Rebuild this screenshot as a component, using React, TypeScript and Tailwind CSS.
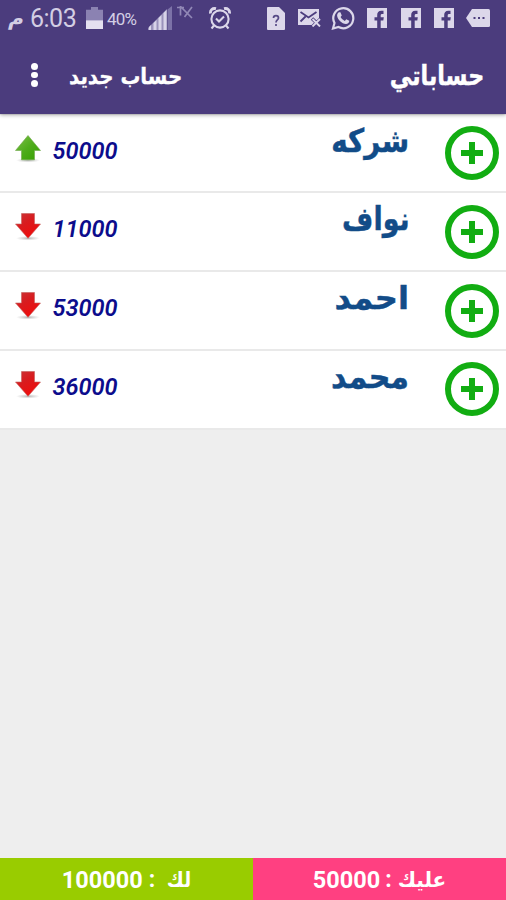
type Account = {
  name: string;
  amount: number;
  direction: "up" | "down";
  nameClass: string;
};

// each name is stretched a little, the display face is taller than DejaVu
const accounts: Account[] = [
  { name: "شركه", amount: 50000, direction: "up", nameClass: "scale-x-[0.96] scale-y-[1.12]" },
  { name: "نواف", amount: 11000, direction: "down", nameClass: "scale-x-[0.93] scale-y-[1.12]" },
  { name: "احمد", amount: 53000, direction: "down", nameClass: "scale-x-[1.11] scale-y-[1.1]" },
  { name: "محمد", amount: 36000, direction: "down", nameClass: "scale-x-[1.04] scale-y-[1.12]" },
];

function BatteryIcon() {
  return (
    <svg className="ml-[10px] h-[22px] w-[17px] shrink-0" viewBox="0 0 17 23" preserveAspectRatio="none">
      <path d="M5 0h7v3h5v12H0V3h5z" fill="#8b82b2" />
      <path d="M0 14h17v9H0z" fill="#e4e0f0" />
    </svg>
  );
}

function SignalIcon() {
  return (
    <svg className="ml-[11px] h-[24px] w-[25px] shrink-0" viewBox="0 0 25 24">
      <path d="M0 24v-2l19-19v21z" fill="#9a92bb" />
      <path d="M1 24v-3l2-2v5zM5.5 24v-7l3-3v10zM10.5 24V12l3-3v15zM15.5 24V7l3-3v20z" fill="#d8d3e8" />
      <path d="M19.5 24V3.5L24 0v24z" fill="#7c72a7" />
    </svg>
  );
}

function NoDataIcon() {
  return (
    <svg className="mt-[-11px] ml-[3px] h-[13px] w-[18px] shrink-0" viewBox="0 0 18 13" fill="none" stroke="#9188b6" strokeWidth="1.7">
      <path d="M1 1.5h7M4.5 1.5v8M8.5 11l7.5-10M4 0l12 12" />
    </svg>
  );
}

function AlarmIcon() {
  return (
    <svg className="ml-[15px] h-[23px] w-[22px] shrink-0" viewBox="0 0 22 23" fill="none" stroke="#dcd7ea" strokeWidth="2.1">
      <circle cx="11" cy="12" r="8.6" />
      <path d="M7 11.5l3 3 5-5M5 18.5l-2.5 3M17 18.5l2.5 3" />
      <path d="M1.5 6.5C1 3 3.5 .8 7 1.7M20.5 6.5C21 3 18.5 .8 15 1.7" strokeWidth="2.8" />
    </svg>
  );
}

function FileIcon() {
  return (
    <svg className="ml-[36px] h-[23px] w-[18px] shrink-0" viewBox="0 0 18 23">
      <path d="M1 0h11l6 6v16a1 1 0 0 1-1 1H1a1 1 0 0 1-1-1V1a1 1 0 0 1 1-1z" fill="#dcd7ea" />
      <path d="M6.5 11c0-3.2 5-3.2 5 0 0 2-2.5 2-2.5 4.5M9 17v2" fill="none" stroke="#574a87" strokeWidth="1.7" />
    </svg>
  );
}

function MailIcon() {
  return (
    <svg className="ml-[13px] h-[18px] w-[23px] shrink-0" viewBox="0 0 23 18">
      <path d="M0 0h21v16H0z" fill="#dcd7ea" />
      <path d="M2.5 3l8 5.500 8-5.500M2.500 12.500l5-5" fill="none" stroke="#4b3c7d" strokeWidth="1.8" />
      <path d="M14 9.5l9 8.5M23 9.5L14 18" fill="none" stroke="#4b3c7d" strokeWidth="3.5" />
      <path d="M14.5 10l7.5 7.5M22 10l-7.5 7.5" fill="none" stroke="#dcd7ea" strokeWidth="1.9" />
    </svg>
  );
}

function WhatsAppIcon() {
  return (
    <svg className="ml-[10px] h-[24px] w-[24px] shrink-0" viewBox="0 0 24 24">
      <path d="M2 22.5l1.5-5.5A10 10 0 1 1 7.5 21z" fill="none" stroke="#dcd7ea" strokeWidth="2.2" />
      <path d="M8 6.2l1.4.1 1.4 3.2-1.2 1.6c1 1.8 2.3 3 4.2 3.8l1.5-1.6 3 1.5c.1 2-1.5 3.2-3.3 3.2-4.2-.4-8.3-4.4-8.900-8.300-.1-1.500.7-2.900 1.900-3.500z" fill="#dcd7ea" />
    </svg>
  );
}

function FacebookIcon({ className }: { className: string }) {
  return (
    <svg className={className} viewBox="0 0 20 20">
      <path d="M0 0h20v20H0z" fill="#dcd7ea" />
      <path d="M16.5 2.8h-2.1c-3 0-4.2 1.8-4.2 4.2v2.3H7.500V12.500h2.700V20h3.500v-7.500h2.600l.5-3.200h-3.100V7.600c0-1 .4-1.500 1.500-1.500h1.300z" fill="#4b3c7d" />
    </svg>
  );
}

function MoreTagIcon() {
  return (
    <svg className="ml-[12px] h-[18px] w-[24px] shrink-0" viewBox="0 0 24 18">
      <path d="M6 0h16.5a1.5 1.5 0 0 1 1.5 1.5v15a1.5 1.5 0 0 1-1.5 1.5H6L0 9z" fill="#dcd7ea" />
      <path d="M7.5 8h2v2h-2zM12 8h2v2h-2zM16.5 8h2v2h-2z" fill="#4b3c7d" />
    </svg>
  );
}

function StatusBar() {
  return (
    <div className="flex h-[36px] items-center pl-[10px] text-[#d3cee4]">
      <span className="w-[15px] -skew-x-12 scale-x-110 text-[19px] font-bold leading-none">م</span>
      <span className="ml-[5px] mt-px w-[46px] font-['Roboto'] text-[25px] leading-none tracking-[-0.5px]">6:03</span>
      <BatteryIcon />
      <span className="ml-[4px] mt-[2px] w-[30px] font-['Roboto'] text-[17px] leading-none tracking-[-0.8px]">40%</span>
      <SignalIcon />
      <NoDataIcon />
      <AlarmIcon />
      <FileIcon />
      <MailIcon />
      <WhatsAppIcon />
      <FacebookIcon className="ml-[12px] h-[20px] w-[20px] shrink-0" />
      <FacebookIcon className="ml-[14px] h-[20px] w-[20px] shrink-0" />
      <FacebookIcon className="ml-[13px] h-[20px] w-[20px] shrink-0" />
      <MoreTagIcon />
    </div>
  );
}

function ArrowIcon({ direction }: { direction: "up" | "down" }) {
  const up = direction === "up";
  return (
    <svg className="h-[28px] w-[28px] shrink-0" viewBox="0 0 28 28">
      <defs>
        <linearGradient id="green" x1="0" y1="0" x2="1" y2="1">
          <stop offset="0" stopColor="#7fc04a" />
          <stop offset="0.5" stopColor="#4fac1c" />
          <stop offset="1" stopColor="#35a000" />
        </linearGradient>
        <linearGradient id="red" x1="0" y1="0" x2="0.6" y2="1">
          <stop offset="0" stopColor="#c93638" />
          <stop offset="0.45" stopColor="#d81c1f" />
          <stop offset="1" stopColor="#f00c0c" />
        </linearGradient>
        <radialGradient id="shade">
          <stop offset="0" stopColor="#777" stopOpacity="0.55" />
          <stop offset="1" stopColor="#999" stopOpacity="0" />
        </radialGradient>
      </defs>
      <ellipse cx="14" cy="25.3" rx="12" ry="2.3" fill="url(#shade)" />
      {up ? (
        <path d="M14 .5L26.500 15.500H20.500v9.300h-13V15.500H1.500z" fill="url(#green)" stroke="#6fa84a" strokeWidth="0.6" />
      ) : (
        <path d="M7.500 .5h13v10.500h6L14 25.300 1.500 11h6z" fill="url(#red)" stroke="#c4605c" strokeWidth="0.6" />
      )}
    </svg>
  );
}

function AddIcon() {
  return (
    <svg className="h-[54px] w-[54px]" viewBox="0 0 54 54" fill="none" stroke="#12ad12" strokeWidth="6">
      <circle cx="27" cy="27" r="24" />
      <path d="M27 16v22M16 27h22" />
    </svg>
  );
}

function AccountRow({ account }: { account: Account }) {
  return (
    <li className="flex h-[78.7px] items-start border-b-2 border-[#e9e9e9] bg-white pl-[14px] pr-[7.5px]">
      <div className="mt-[20px]">
        <ArrowIcon direction={account.direction} />
      </div>
      <span className="ml-[10.5px] mt-[22px] font-['Roboto'] text-[23.5px] font-semibold italic leading-[28px] text-[#0c0c8c]">
        {account.amount}
      </span>
      <span
        dir="rtl"
        className={`ml-auto mr-[35px] mt-[7px] origin-right text-[29px] font-bold leading-[38px] text-[#124c88] [-webkit-text-stroke:0.4px_#124c88] ${account.nameClass}`}
      >
        {account.name}
      </span>
      <button className="mt-[11.5px]">
        <AddIcon />
      </button>
    </li>
  );
}

export default function App() {
  return (
    <div className="flex h-[900px] w-[506px] flex-col overflow-hidden bg-[#eeeeee] font-['DejaVu_Sans',sans-serif]">
      <header className="relative h-[114px] shrink-0 bg-[#4b3c7d] text-white shadow-[0_1px_4px_rgba(0,0,0,0.35)]">
        <StatusBar />
        <div className="flex h-[78px] items-center pl-[31px] pr-[22px]">
          {/* overflow menu */}
          <button className="flex flex-col gap-[2px]">
            <span className="size-[6.5px] rounded-full bg-white" />
            <span className="size-[6.5px] rounded-full bg-white" />
            <span className="size-[6.5px] rounded-full bg-white" />
          </button>
          <button
            dir="rtl"
            className="ml-[31.5px] mt-px origin-left scale-x-[0.99] scale-y-[1.1] text-[20px] font-bold leading-none [-webkit-text-stroke:0.3px_white]"
          >
            حساب جديد
          </button>
          <h1
            dir="rtl"
            className="ml-auto origin-right scale-x-[0.89] scale-y-[1.08] text-[25px] font-bold leading-none [-webkit-text-stroke:0.4px_white]"
          >
            حساباتي
          </h1>
        </div>
      </header>

      <ul className="shrink-0 pt-[0.8px]">
        {accounts.map((account) => (
          <AccountRow key={account.name} account={account} />
        ))}
      </ul>

      {/* totals */}
      <footer className="mt-auto grid h-[42px] grid-cols-2 text-[20px] font-bold text-white">
        <div dir="rtl" className="flex items-center justify-center bg-[#99cc00] pt-[2px]">
          <span className="origin-right scale-x-[0.93] scale-y-[1.05]">لك</span>
          <span className="mr-[10px] mt-px font-['Roboto'] text-[23px]">:</span>
          <span className="mr-[6px] mt-px font-['Roboto'] text-[23.5px]">100000</span>
        </div>
        <div dir="rtl" className="flex items-center justify-center bg-[#ff4081] pt-[2px]">
          <span className="origin-left scale-y-[1.05]">عليك</span>
          <span className="mr-[6px] mt-px font-['Roboto'] text-[23px]">:</span>
          <span className="mr-[5px] mt-px font-['Roboto'] text-[23.5px]">50000</span>
        </div>
      </footer>
    </div>
  );
}
